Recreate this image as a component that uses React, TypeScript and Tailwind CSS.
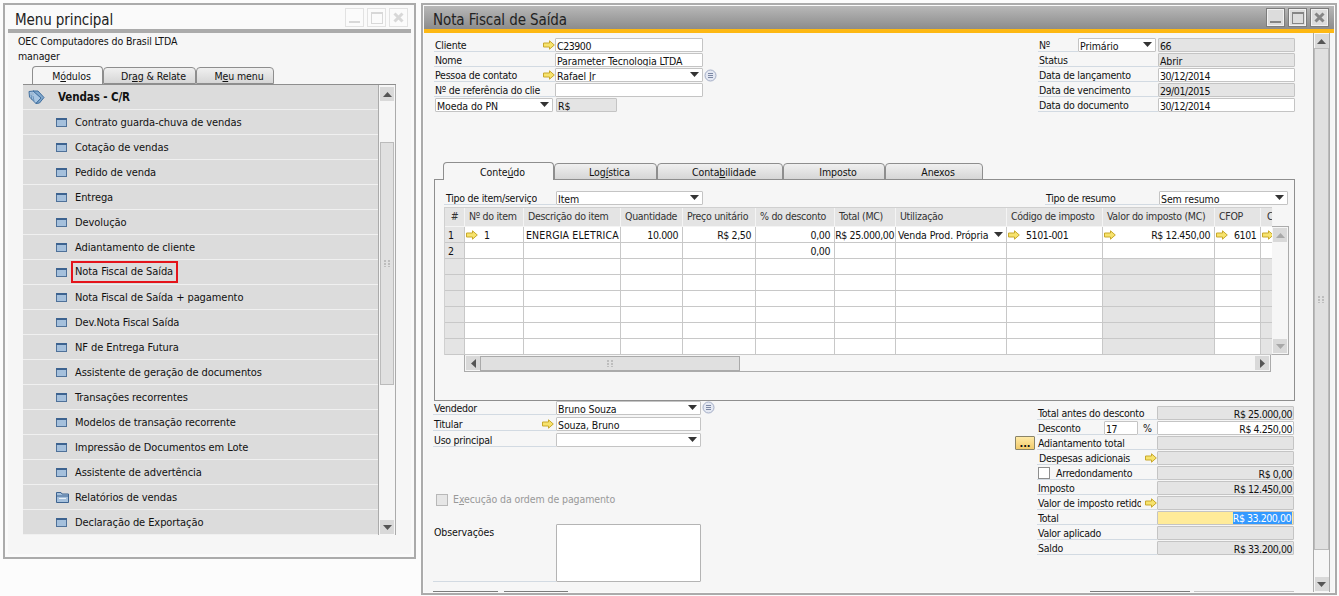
import React from "react";

const menuItems = [
  "Contrato guarda-chuva de vendas",
  "Cotação de vendas",
  "Pedido de venda",
  "Entrega",
  "Devolução",
  "Adiantamento de cliente",
  "Nota Fiscal de Saída",
  "Nota Fiscal de Saída + pagamento",
  "Dev.Nota Fiscal Saída",
  "NF de Entrega Futura",
  "Assistente de geração de documentos",
  "Transações recorrentes",
  "Modelos de transação recorrente",
  "Impressão de Documentos em Lote",
  "Assistente de advertência",
  "Relatórios de vendas",
  "Declaração de Exportação",
];

const gridHead = [
  "#",
  "Nº do item",
  "Descrição do item",
  "Quantidade",
  "Preço unitário",
  "% do desconto",
  "Total (MC)",
  "Utilização",
  "Código de imposto",
  "Valor do imposto (MC)",
  "CFOP",
  "C",
];

function Arrow() {
  return (
    <svg width="12" height="10" viewBox="0 0 12 10" className="shrink-0">
      <path d="M0.5 3H6.5V0.8L11.3 5L6.5 9.2V7H0.5Z" fill="#f7e36d" stroke="#c8a82c" strokeWidth="1" />
    </svg>
  );
}

function Caret({ color = "#333" }: { color?: string }) {
  return (
    <svg width="9" height="5" viewBox="0 0 9 5" className="shrink-0">
      <path d="M0 0H9L4.5 5Z" fill={color} />
    </svg>
  );
}

function ListBadge() {
  return (
    <svg width="13" height="13" viewBox="0 0 13 13" className="shrink-0">
      <circle cx="6.5" cy="6.5" r="5.5" fill="#e4e8f2" stroke="#a4aec6" />
      <path d="M4 4.5H9M4 6.5H9M4 8.5H9" stroke="#7c88a4" strokeWidth="1" />
    </svg>
  );
}

function Grip() {
  return (
    <svg width="7" height="7" viewBox="0 0 7 7" className="shrink-0">
      <path d="M0 0h2v2H0zM4 0h2v2H4zM0 3h2v2H0zM4 3h2v2H4zM0 6h2v1H0zM4 6h2v1H4z" fill="#bdbdbd" />
    </svg>
  );
}

function WindowIcon() {
  return (
    <svg width="11" height="9" viewBox="0 0 11 9" className="shrink-0">
      <rect x="0.5" y="0.5" width="10" height="8" fill="#a5c0dc" stroke="#4f7199" />
      <rect x="0" y="0" width="11" height="2" fill="#3d6390" />
    </svg>
  );
}

function FolderIcon() {
  return (
    <svg width="13" height="11" viewBox="0 0 13 11" className="shrink-0">
      <path d="M0.5 0.5H5L6 2H12.5V10.5H0.5Z" fill="#a5c0dc" stroke="#3d6390" />
      <path d="M0.5 4H12.5" stroke="#3d6390" />
      <path d="M3 6.5H10" stroke="#e8f0f8" />
    </svg>
  );
}

function TagsIcon() {
  return (
    <svg width="17" height="15" viewBox="0 0 17 15">
      <path d="M1 1.5L6 1L13 8L8 13.5L1.5 7Z" fill="#a9c6e2" stroke="#3f6e9e" />
      <path d="M5 1L10 1L16 7.5L11.5 13L8 13.5L13 8Z" fill="#7fa6cb" stroke="#3f6e9e" />
      <circle cx="4" cy="4" r="1" fill="#fff" stroke="#3f6e9e" strokeWidth="0.5" />
      <path d="M3 5L4 10M5 6L6 11" stroke="#3f6e9e" strokeWidth="0.6" />
    </svg>
  );
}

function Field({
  value = "",
  w,
  gray,
  select,
  right,
}: {
  value?: string;
  w: string;
  gray?: boolean;
  select?: boolean;
  right?: boolean;
}) {
  // digits come out wider than in the original font
  const digits = /\d/.test(value);
  return (
    <div
      className={`${w} ${gray ? "bg-[#e4e4e4]" : "bg-white"} ${digits ? "tracking-[-0.45px]" : ""} flex h-[14px] shrink-0 items-center justify-between overflow-hidden whitespace-nowrap rounded-[1px] border border-[#c4c4c4] px-[1px] pt-[1px] leading-[12px]`}
    >
      {right ? <span className="ml-auto">{value}</span> : <span>{value}</span>}
      {select ? (
        <span className="mb-[2px] mr-[2px]">
          <Caret />
        </span>
      ) : null}
    </div>
  );
}

function Label({ children, w }: { children: React.ReactNode; w: string }) {
  return (
    <div className={`${w} flex h-[14px] shrink-0 items-center justify-between overflow-hidden whitespace-nowrap border-b border-[#d2dae2] pl-[1px] pt-[1px] leading-[12px] tracking-[-0.25px]`}>
      {children}
    </div>
  );
}

function WinButtons({ dim }: { dim?: boolean }) {
  const box = dim
    ? "border-[#e2e2e2] bg-[#fbfbfb]"
    : "border-[#7c7c7c] bg-[#dcdcdc] shadow-[inset_0_0_0_1px_#f2f2f2]";
  const ink = dim ? "#d8d8d8" : "#858585";
  return (
    <div className="flex gap-[3px]">
      <div className={`${box} flex h-[19px] w-[19px] items-end justify-center border pb-[3px]`}>
        <div className="h-[2px] w-[11px]" style={{ background: ink }} />
      </div>
      <div className={`${box} flex h-[19px] w-[19px] items-center justify-center border`}>
        <div className="h-[12px] w-[12px] border border-t-[2px]" style={{ borderColor: ink }} />
      </div>
      <div className={`${box} flex h-[19px] w-[19px] items-center justify-center border`}>
        <svg width="11" height="11" viewBox="0 0 11 11">
          <path d="M1.5 1.5L9.5 9.5M9.5 1.5L1.5 9.5" stroke={ink} strokeWidth="3" />
        </svg>
      </div>
    </div>
  );
}

function ScrollButton({ dir, faint }: { dir: "up" | "down" | "left" | "right"; faint?: boolean }) {
  const rot = { up: "rotate-180", down: "", left: "rotate-90", right: "-rotate-90" }[dir];
  return (
    <div className="flex h-[14px] w-[14px] shrink-0 items-center justify-center bg-[#d9d9d9]">
      <span className={`${rot} flex`}>
        <Caret color={faint ? "#a8a8a8" : "#555"} />
      </span>
    </div>
  );
}

function Tabs({ tabs, h }: { tabs: { w: string; node: React.ReactNode; active?: boolean }[]; h: string }) {
  return (
    <div className={`${h} flex items-end`}>
      {tabs.map((t, i) => (
        <div
          key={i}
          className={`${t.w} ${t.active ? "relative z-10 h-full border-b-0 bg-[#f6f6f6]" : "h-[calc(100%-1px)] bg-gradient-to-b from-[#f0f0f0] to-[#d6d6d6]"} flex shrink-0 items-center justify-center rounded-t-[4px] border border-[#8e8e8e] pl-[8px] pt-[2px]`}
        >
          {t.node}
        </div>
      ))}
    </div>
  );
}

function MenuWindow() {
  return (
    <div className="absolute left-[3px] top-[3px] flex h-[556px] w-[413px] flex-col border-2 border-[#ababab] bg-[#fafafa] p-[3px]">
      <div className="flex h-[21px] shrink-0 items-start justify-between pl-[7px] pr-[3px] text-[15px] leading-[22px] text-[#222]">
        <span className="pt-[1px]">Menu principal</span>
        <WinButtons dim />
      </div>
      <div className="h-[4px] shrink-0 bg-[#ababab]" />
      <div className="flex-1 bg-[#f6f6f6]">
        <div className="pl-[10px] pt-[1px] leading-[15px]">
          <div>OEC Computadores do Brasil LTDA</div>
          <div>manager</div>
        </div>
        <div className="ml-[24px] mt-[2px]">
          <Tabs
            h="h-[18px]"
            tabs={[
              { w: "w-[71px]", active: true, node: <span>M<u>ó</u>dulos</span> },
              { w: "w-[93px]", node: <span>Dr<u>a</u>g &amp; Relate</span> },
              { w: "w-[78px]", node: <span>M<u>e</u>u menu</span> },
            ]}
          />
        </div>
        <div className="ml-[15px] flex w-[373px] border-t border-[#8e8e8e]">
          <div className="w-[355px]">
            <div className="flex h-[25px] items-center border-b border-[#f0f0f0] bg-[#dcdcdc] pl-[5px]">
              <TagsIcon />
              <span className="ml-[13px] pt-[2px] text-[11.5px] font-bold">Vendas - C/R</span>
            </div>
            {menuItems.map((item) => (
              <div key={item} className="flex h-[25px] items-center whitespace-nowrap border-b border-[#f0f0f0] bg-[#dcdcdc] pl-[33px] text-[11px] tracking-[-0.08px]">
                <span className="flex w-[19px] shrink-0">
                  {item === "Relatórios de vendas" ? <FolderIcon /> : <WindowIcon />}
                </span>
                {item === "Nota Fiscal de Saída" ? (
                  <span className="-ml-[4px] flex h-[22px] w-[107px] items-center border-2 border-[#e4141b] pl-[2px] pt-[1px]">{item}</span>
                ) : (
                  <span className="pt-[2px]">{item}</span>
                )}
              </div>
            ))}
          </div>
          <div className="flex w-[18px] flex-col items-center border-x border-[#ababab] bg-[#f6f6f6] pt-[2px]">
            <ScrollButton dir="up" />
            <div className="mt-[41px] flex h-[243px] w-[14px] items-center justify-center border border-[#bbb] bg-[#e0e0e0]">
              <Grip />
            </div>
            <div className="mb-[1px] mt-auto">
              <ScrollButton dir="down" />
            </div>
          </div>
        </div>
      </div>
    </div>
  );
}

function TopForm() {
  return (
    <div className="ml-[10px] mr-[16px] flex h-[75px] justify-between">
      <div className="flex flex-col gap-[1px]">
        <div className="flex">
          <Label w="w-[121px]">
            <span>Cliente</span>
            <Arrow />
          </Label>
          <Field w="w-[148px]" value="C23900" />
        </div>
        <div className="flex">
          <Label w="w-[121px]">Nome</Label>
          <Field w="w-[148px]" value="Parameter Tecnologia LTDA" />
        </div>
        <div className="flex items-center">
          <Label w="w-[121px]">
            <span>Pessoa de contato</span>
            <Arrow />
          </Label>
          <Field w="w-[148px]" value="Rafael Jr" select />
          <span className="ml-[1px] flex">
            <ListBadge />
          </span>
        </div>
        <div className="flex">
          <Label w="w-[121px]">Nº de referência do clie</Label>
          <Field w="w-[148px]" />
        </div>
        <div className="flex">
          <Field w="w-[118px] ml-[1px] mr-[3px]" value="Moeda do PN" select />
          <Field w="w-[61px]" value="R$" gray />
        </div>
      </div>
      <div className="flex flex-col gap-[1px]">
        <div className="flex">
          <Label w="w-[40px]">Nº</Label>
          <Field w="w-[78px] mr-[2px]" value="Primário" select />
          <Field w="w-[137px]" value="66" gray />
        </div>
        <div className="flex">
          <Label w="w-[120px]">Status</Label>
          <Field w="w-[137px]" value="Abrir" gray />
        </div>
        <div className="flex">
          <Label w="w-[120px]">Data de lançamento</Label>
          <Field w="w-[137px]" value="30/12/2014" />
        </div>
        <div className="flex">
          <Label w="w-[120px]">Data de vencimento</Label>
          <Field w="w-[137px]" value="29/01/2015" gray />
        </div>
        <div className="flex">
          <Label w="w-[120px]">Data do documento</Label>
          <Field w="w-[137px]" value="30/12/2014" />
        </div>
      </div>
    </div>
  );
}

function Cell({ children, className = "" }: { children?: React.ReactNode; className?: string }) {
  return (
    <div className={`flex h-[16px] items-center overflow-hidden whitespace-nowrap border-b border-r border-[#c8c8c8] leading-[12px] tracking-[-0.4px] ${className}`}>
      {children}
    </div>
  );
}

function ItemGrid() {
  const blank = [3, 4, 5, 6, 7, 8];
  return (
    <div className="grid w-[828px] grid-cols-[20px_59px_97px_62px_73px_79px_61px_111px_96px_112px_46px_12px] border-l border-t border-[#d0d0d0]">
      {gridHead.map((h, i) => (
        <div
          key={h}
          className={`${i === 0 ? "justify-center" : i === 11 ? "pl-[6px]" : "pl-[4px]"} flex h-[19px] items-center overflow-hidden whitespace-nowrap border-b border-r border-[#f4f4f4] bg-[#e4e4e4] pb-[1px] tracking-[-0.3px] text-[#333]`}
        >
          {h}
        </div>
      ))}

      <Cell className="bg-[#e4e4e4] pl-[3px]">1</Cell>
      <Cell className="bg-white pl-[1px]"><Arrow /><span className="ml-[6px]">1</span></Cell>
      <Cell className="bg-white pl-[2px] !tracking-[0.15px]">ENERGIA ELETRICA</Cell>
      <Cell className="justify-end bg-white pr-[4px]">10.000</Cell>
      <Cell className="justify-end bg-white pr-[4px]">R$ 2,50</Cell>
      <Cell className="justify-end bg-white pr-[4px]">0,00</Cell>
      <Cell className="justify-end bg-white pr-[1px]">R$ 25.000,00</Cell>
      <Cell className="justify-between bg-white pl-[2px] pr-[3px] !tracking-[-0.1px]">Venda Prod. Própria<Caret /></Cell>
      <Cell className="bg-white pl-[1px]"><Arrow /><span className="ml-[6px]">5101-001</span></Cell>
      <Cell className="justify-between bg-white pl-[1px] pr-[4px]"><Arrow /><span>R$ 12.450,00</span></Cell>
      <Cell className="bg-white pl-[1px]"><Arrow /><span className="ml-[6px]">6101</span></Cell>
      <Cell className="bg-white pl-[1px]"><Arrow /></Cell>

      <Cell className="bg-[#e4e4e4] pl-[3px]">2</Cell>
      <Cell className="bg-white" />
      <Cell className="bg-white" />
      <Cell className="bg-white" />
      <Cell className="bg-white" />
      <Cell className="justify-end bg-white pr-[4px]">0,00</Cell>
      <Cell className="bg-white" />
      <Cell className="bg-white" />
      <Cell className="bg-white" />
      <Cell className="bg-white" />
      <Cell className="bg-white" />
      <Cell className="bg-white" />

      {blank.map((r) => (
        <React.Fragment key={r}>
          <Cell className="bg-[#e4e4e4]" />
          <Cell className="bg-white" />
          <Cell className="bg-white" />
          <Cell className="bg-white" />
          <Cell className="bg-white" />
          <Cell className="bg-white" />
          <Cell className="bg-white" />
          <Cell className="bg-white" />
          <Cell className="bg-white" />
          <Cell className="bg-[#e4e4e4]" />
          <Cell className="bg-white" />
          <Cell className="bg-[#e4e4e4]" />
        </React.Fragment>
      ))}
    </div>
  );
}

function ContentPanel() {
  return (
    <div className="ml-[10px] h-[222px] w-[861px] border border-[#8e8e8e] pl-[9px] pt-[11px]">
      <div className="flex h-[14px] w-[844px] justify-between">
        <div className="flex">
          <Label w="w-[112px]"><span className="w-[92px] overflow-hidden pl-[1px]">Tipo de item/serviço</span></Label>
          <Field w="w-[147px]" value="Item" select />
        </div>
        <div className="flex">
          <Label w="w-[114px]">Tipo de resumo</Label>
          <Field w="w-[129px]" value="Sem resumo" select />
        </div>
      </div>
      <div className="mt-[2px]">
        <div className="flex">
          <ItemGrid />
          <div className="mt-[19px] flex h-[129px] w-[17px] flex-col items-center justify-between border border-l-0 border-[#ababab] bg-[#f6f6f6] py-[1px]">
            <ScrollButton dir="up" faint />
            <ScrollButton dir="down" faint />
          </div>
        </div>
        <div className="ml-[20px] flex h-[17px] w-[807px] items-center border-b border-l border-r border-[#ababab] pl-[1px] pr-[1px]">
          <ScrollButton dir="left" />
          <div className="flex h-[15px] w-[260px] items-center justify-center border border-[#aaa] bg-[#e0e0e0]">
            <Grip />
          </div>
          <div className="ml-auto">
            <ScrollButton dir="right" />
          </div>
        </div>
      </div>
    </div>
  );
}

function LowerLeft() {
  return (
    <div className="ml-[9px] flex w-[280px] flex-col">
      <div className="flex h-[16px] items-start">
        <Label w="w-[123px]">Vendedor</Label>
        <Field w="w-[145px]" value="Bruno Souza" select />
        <span className="ml-[1px] flex">
          <ListBadge />
        </span>
      </div>
      <div className="flex h-[16px] items-start">
        <Label w="w-[123px]">
          <span>Titular</span>
          <span className="flex pr-[2px]">
            <Arrow />
          </span>
        </Label>
        <Field w="w-[145px]" value="Souza, Bruno" />
      </div>
      <div className="flex h-[16px] items-start">
        <Label w="w-[123px]">Uso principal</Label>
        <Field w="w-[145px]" value="" select />
      </div>
      <div className="ml-[3px] mt-[45px] flex h-[12px] items-center text-[#999]">
        <div className="h-[12px] w-[12px] border border-[#b8b8b8] bg-[#e6e6e6]" />
        <span className="ml-[5px]">E<u>x</u>ecução da ordem de pagamento</span>
      </div>
      <div className="mt-[18px] flex h-[58px]">
        <div className="w-[123px] border-b border-[#d2dae2] pl-[1px] pt-[1px] leading-[14px]">Observações</div>
        <div className="w-[145px] rounded-[1px] border border-[#b4b4b4] bg-white" />
      </div>
      <div className="mt-auto flex gap-[6px]">
        <div className="h-[1px] w-[65px] bg-[#7c7c7c]" />
        <div className="h-[1px] w-[64px] bg-[#7c7c7c]" />
      </div>
    </div>
  );
}

function TotalRow({
  label,
  value,
  gutter,
  arrow,
  highlight,
}: {
  label: React.ReactNode;
  value?: string;
  gutter?: React.ReactNode;
  arrow?: boolean;
  highlight?: boolean;
}) {
  return (
    <div className="flex h-[15px]">
      <div className="w-[22px] shrink-0">{gutter}</div>
      <Label w="w-[120px]">
        {label}
        {arrow ? <Arrow /> : null}
      </Label>
      {highlight ? (
        <div className="flex h-[14px] w-[137px] shrink-0 items-center justify-end overflow-hidden rounded-[1px] border border-[#c4c4c4] bg-[#ffeb99] pr-[1px] leading-[12px] tracking-[-0.45px]">
          <span className="bg-[#3399ff] pr-[1px] text-white">{value}</span>
        </div>
      ) : (
        <Field w="w-[137px]" value={value} gray right />
      )}
    </div>
  );
}

function LowerRight() {
  return (
    <div className="mr-[17px] flex w-[279px] flex-col pt-[5px]">
      <TotalRow label="Total antes do desconto" value="R$ 25.000,00" />
      <div className="flex h-[15px]">
        <div className="w-[22px] shrink-0" />
        <Label w="w-[67px]">Desconto</Label>
        <Field w="w-[34px]" value="17" />
        <Label w="w-[19px]">
          <span className="pl-[4px]">%</span>
        </Label>
        <Field w="w-[137px]" value="R$ 4.250,00" right />
      </div>
      <TotalRow
        label="Adiantamento total"
        gutter={
          <div className="flex h-[14px] w-[20px] items-end justify-center rounded-[1px] border border-[#8a8468] bg-gradient-to-b from-[#ffeaa6] to-[#f1ca6a] pb-[2px] text-[11px] font-bold leading-[6px]">
            ...
          </div>
        }
      />
      <TotalRow label={<span className="pl-[1px]">Despesas adicionais</span>} arrow />
      <TotalRow
        label={
          <span className="flex items-center">
            <span className="h-[12px] w-[12px] border border-[#8e8e8e] bg-white" />
            <span className="ml-[6px]">Arredondamento</span>
          </span>
        }
        value="R$ 0,00"
      />
      <TotalRow label="Imposto" value="R$ 12.450,00" />
      <TotalRow label={<span className="w-[103px] overflow-hidden">Valor de imposto retido</span>} arrow />
      <TotalRow label="Total" value="R$ 33.200,00" highlight />
      <TotalRow label="Valor aplicado" />
      <TotalRow label="Saldo" value="R$ 33.200,00" />
      <div className="mt-auto flex justify-end gap-[4px]">
        <div className="h-[1px] w-[100px] bg-[#7c7c7c]" />
        <div className="h-[1px] w-[100px] bg-[#c4c4c4]" />
      </div>
    </div>
  );
}

function InvoiceWindow() {
  return (
    <div className="absolute left-[421px] top-[3px] flex h-[592px] w-[916px] flex-col border-2 border-[#ababab] bg-[#fafafa] p-[1px]">
      <div className="flex h-[23px] shrink-0 items-start justify-between bg-gradient-to-b from-[#b8b8b8] to-[#8c8c8c] pl-[9px] pr-[5px] pt-[2px] text-[15px] leading-[22px] text-[#222]">
        <span className="pt-[1px]">Nota Fiscal de Saída</span>
        <WinButtons />
      </div>
      <div className="h-[4px] shrink-0 bg-[#fdb813]" />
      <div className="flex flex-1 bg-[#f6f6f6]">
        <div className="flex w-[887px] shrink-0 flex-col pt-[5px]">
          <TopForm />
          <div className="relative z-10 -mb-[1px] ml-[19px] mt-[49px]">
            <Tabs
              h="h-[18px]"
              tabs={[
                { w: "w-[111px]", active: true, node: <span>Conte<u>ú</u>do</span> },
                { w: "w-[103px]", node: <span>Log<u>í</u>stica</span> },
                { w: "w-[126px]", node: <span>Conta<u>b</u>ilidade</span> },
                { w: "w-[102px]", node: <span>Imposto</span> },
                { w: "w-[98px]", node: <span>Anexos</span> },
              ]}
            />
          </div>
          <ContentPanel />
          <div className="flex flex-1 justify-between">
            <LowerLeft />
            <LowerRight />
          </div>
        </div>
        <div className="ml-[2px] flex w-[17px] flex-col items-center border-x border-[#ababab] bg-[#f6f6f6] py-[1px]">
          <ScrollButton dir="up" />
          <div className="flex h-[502px] w-[15px] items-center justify-center border border-[#bbb] bg-[#e0e0e0]">
            <Grip />
          </div>
          <div className="mt-auto">
            <ScrollButton dir="down" />
          </div>
        </div>
      </div>
    </div>
  );
}

export default function App() {
  return (
    <div className="relative h-[596px] w-[1339px] overflow-hidden bg-[#fcfcfc] font-['DejaVu_Sans_Condensed','DejaVu_Sans',sans-serif] text-[10.5px] tracking-[-0.1px] text-[#111]">
      <MenuWindow />
      <InvoiceWindow />
    </div>
  );
}
